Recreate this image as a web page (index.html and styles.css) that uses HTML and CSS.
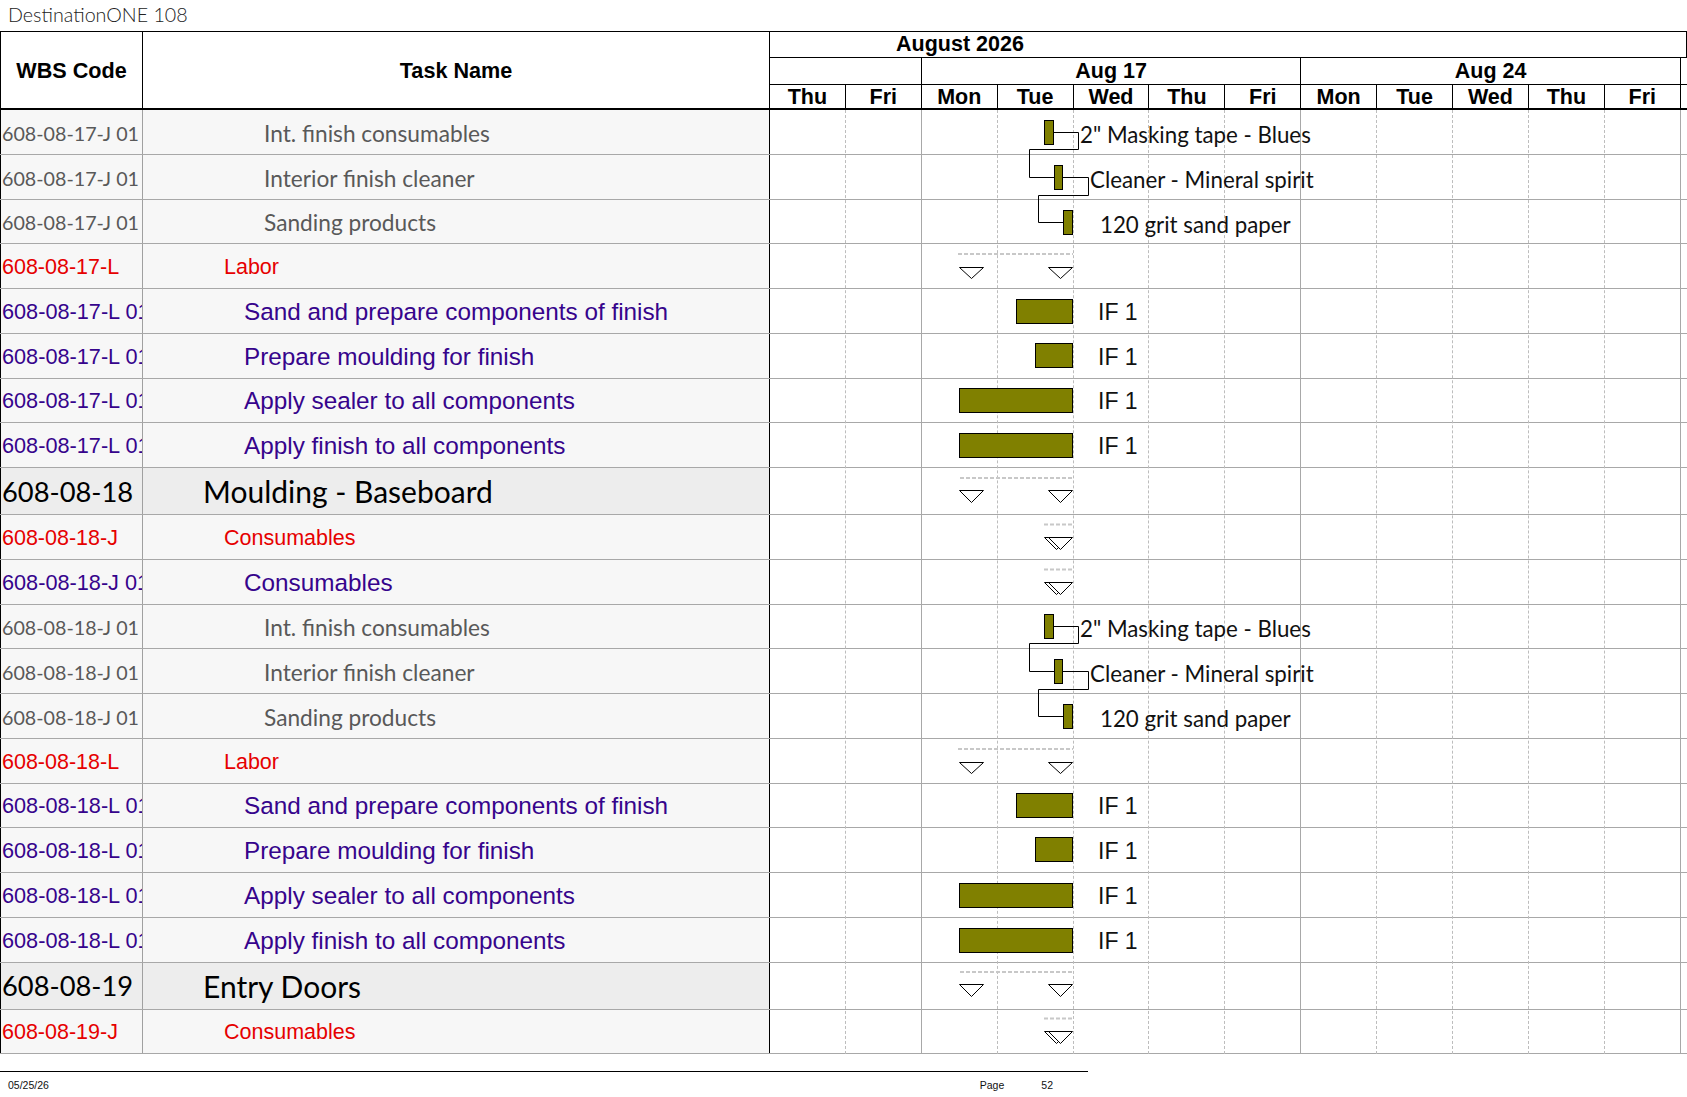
FILE: index.html
```html
<!DOCTYPE html>
<html lang="en">
<head>
<meta charset="utf-8">
<title>DestinationONE 108</title>
<link rel="stylesheet" href="styles.css">
</head>
<body>
<div class="page">
  <div class="title">DestinationONE 108</div>
  <div class="sheet">
    <div class="head">
      <div class="hcell wbs">WBS Code</div>
      <div class="hcell task">Task Name</div>
      <div class="timescale">
        <div class="month"><span>August 2026</span></div>
        <div class="weeks">
          <div class="wk lead"></div>
          <div class="wk">Aug 17</div>
          <div class="wk">Aug 24</div>
          <div class="wk-tail"></div>
        </div>
        <div class="days">
          <div class="day">Thu</div><div class="day">Fri</div><div class="day">Mon</div><div class="day">Tue</div>
          <div class="day">Wed</div><div class="day">Thu</div><div class="day">Fri</div><div class="day">Mon</div>
          <div class="day">Tue</div><div class="day">Wed</div><div class="day">Thu</div><div class="day">Fri</div>
          <div class="day-tail"></div>
        </div>
      </div>
    </div>

    <div class="body">
      <div class="gridlines">
        <div class="gl"></div><div class="gl we"></div><div class="gl"></div><div class="gl"></div>
        <div class="gl"></div><div class="gl"></div><div class="gl we"></div><div class="gl"></div>
        <div class="gl"></div><div class="gl"></div><div class="gl"></div><div class="gl we"></div>
      </div>

      <div class="row res"><div class="c-wbs">608-08-17-J 01</div><div class="c-task">Int. finish consumables</div><div class="c-chart"></div></div>
      <div class="row res"><div class="c-wbs">608-08-17-J 01</div><div class="c-task">Interior finish cleaner</div><div class="c-chart"></div></div>
      <div class="row res"><div class="c-wbs">608-08-17-J 01</div><div class="c-task">Sanding products</div><div class="c-chart"></div></div>
      <div class="row lvl"><div class="c-wbs">608-08-17-L</div><div class="c-task">Labor</div><div class="c-chart"></div></div>
      <div class="row tsk"><div class="c-wbs">608-08-17-L 01</div><div class="c-task">Sand and prepare components of finish</div><div class="c-chart"></div></div>
      <div class="row tsk"><div class="c-wbs">608-08-17-L 01</div><div class="c-task">Prepare moulding for finish</div><div class="c-chart"></div></div>
      <div class="row tsk"><div class="c-wbs">608-08-17-L 01</div><div class="c-task">Apply sealer to all components</div><div class="c-chart"></div></div>
      <div class="row tsk"><div class="c-wbs">608-08-17-L 01</div><div class="c-task">Apply finish to all components</div><div class="c-chart"></div></div>
      <div class="row grp"><div class="c-wbs">608-08-18</div><div class="c-task">Moulding - Baseboard</div><div class="c-chart"></div></div>
      <div class="row lvl"><div class="c-wbs">608-08-18-J</div><div class="c-task">Consumables</div><div class="c-chart"></div></div>
      <div class="row tsk"><div class="c-wbs">608-08-18-J 01</div><div class="c-task">Consumables</div><div class="c-chart"></div></div>
      <div class="row res"><div class="c-wbs">608-08-18-J 01</div><div class="c-task">Int. finish consumables</div><div class="c-chart"></div></div>
      <div class="row res"><div class="c-wbs">608-08-18-J 01</div><div class="c-task">Interior finish cleaner</div><div class="c-chart"></div></div>
      <div class="row res"><div class="c-wbs">608-08-18-J 01</div><div class="c-task">Sanding products</div><div class="c-chart"></div></div>
      <div class="row lvl"><div class="c-wbs">608-08-18-L</div><div class="c-task">Labor</div><div class="c-chart"></div></div>
      <div class="row tsk"><div class="c-wbs">608-08-18-L 01</div><div class="c-task">Sand and prepare components of finish</div><div class="c-chart"></div></div>
      <div class="row tsk"><div class="c-wbs">608-08-18-L 01</div><div class="c-task">Prepare moulding for finish</div><div class="c-chart"></div></div>
      <div class="row tsk"><div class="c-wbs">608-08-18-L 01</div><div class="c-task">Apply sealer to all components</div><div class="c-chart"></div></div>
      <div class="row tsk"><div class="c-wbs">608-08-18-L 01</div><div class="c-task">Apply finish to all components</div><div class="c-chart"></div></div>
      <div class="row grp"><div class="c-wbs">608-08-19</div><div class="c-task">Entry Doors</div><div class="c-chart"></div></div>
      <div class="row lvl"><div class="c-wbs">608-08-19-J</div><div class="c-task">Consumables</div><div class="c-chart"></div></div>

      <svg class="gantt" width="1687" height="945" viewBox="0 110 1687 945" xmlns="http://www.w3.org/2000/svg">
        <g class="summ">
          <path d="M958 254H1073"/><path d="M960 478H1074"/><path d="M1044 524.5H1073"/><path d="M1044 569.5H1073"/>
          <path d="M958 749H1073"/><path d="M960 972H1074"/><path d="M1044 1018.5H1073"/>
        </g>
        <g class="tri">
          <polygon points="959.5,267.5 983.5,267.5 971.5,278.5"/><polygon points="1048.5,267.5 1072.5,267.5 1060.5,278.5"/>
          <polygon points="959.5,490.5 983.5,490.5 971.5,502.5"/><polygon points="1048.5,490.5 1072.5,490.5 1060.5,502.5"/>
          <polygon points="1044.5,537.5 1068.5,537.5 1056.5,549.5"/><polygon points="1048.5,537.5 1072.5,537.5 1060.5,549.5"/>
          <polygon points="1044.5,582.5 1068.5,582.5 1056.5,594.5"/><polygon points="1048.5,582.5 1072.5,582.5 1060.5,594.5"/>
          <polygon points="959.5,762.5 983.5,762.5 971.5,773.5"/><polygon points="1048.5,762.5 1072.5,762.5 1060.5,773.5"/>
          <polygon points="959.5,984.5 983.5,984.5 971.5,996.5"/><polygon points="1048.5,984.5 1072.5,984.5 1060.5,996.5"/>
          <polygon points="1044.5,1031.5 1068.5,1031.5 1056.5,1043.5"/><polygon points="1048.5,1031.5 1072.5,1031.5 1060.5,1043.5"/>
        </g>
        <g class="link">
          <path d="M1053.5 132.5H1078.5V149.5H1029.5V177.5H1054.5"/>
          <path d="M1062.5 177.5H1088.5V195.5H1038.5V222.5H1063.5"/>
          <path d="M1053.5 626.5H1078.5V643.5H1029.5V671.5H1054.5"/>
          <path d="M1062.5 671.5H1088.5V689.5H1038.5V716.5H1063.5"/>
        </g>
        <g class="bar">
          <rect x="1044.5" y="120.5" width="9" height="24"/>
          <rect x="1054.5" y="165.5" width="8" height="24"/>
          <rect x="1063.5" y="210.5" width="9" height="24"/>
          <rect x="1016.5" y="299.5" width="56" height="24"/>
          <rect x="1035.5" y="343.5" width="37" height="24"/>
          <rect x="959.5" y="388.5" width="113" height="24"/>
          <rect x="959.5" y="433.5" width="113" height="24"/>
          <rect x="1044.5" y="614.5" width="9" height="24"/>
          <rect x="1054.5" y="659.5" width="8" height="24"/>
          <rect x="1063.5" y="704.5" width="9" height="24"/>
          <rect x="1016.5" y="793.5" width="56" height="24"/>
          <rect x="1035.5" y="837.5" width="37" height="24"/>
          <rect x="959.5" y="883.5" width="113" height="24"/>
          <rect x="959.5" y="928.5" width="113" height="24"/>
        </g>
        <g class="lbl">
          <text x="1080" y="142.5">2" Masking tape - Blues</text>
          <text x="1090" y="187.5">Cleaner - Mineral spirit</text>
          <text x="1100" y="232.5">120 grit sand paper</text>
          <text x="1080" y="636.5">2" Masking tape - Blues</text>
          <text x="1090" y="681.5">Cleaner - Mineral spirit</text>
          <text x="1100" y="726.5">120 grit sand paper</text>
        </g>
        <g class="iflbl">
          <text x="1098" y="319.5">IF 1</text>
          <text x="1098" y="364.5">IF 1</text>
          <text x="1098" y="408.5">IF 1</text>
          <text x="1098" y="453.5">IF 1</text>
          <text x="1098" y="813.5">IF 1</text>
          <text x="1098" y="858.5">IF 1</text>
          <text x="1098" y="903.5">IF 1</text>
          <text x="1098" y="948.5">IF 1</text>
        </g>
      </svg>
    </div>
  </div>
  <div class="footer">
    <span class="f-date">05/25/26</span>
    <span class="f-page">Page</span>
    <span class="f-num">52</span>
  </div>
</div>
</body>
</html>
```

FILE: styles.css
```css
* { box-sizing: border-box; }
html, body { margin: 0; padding: 0; background: #fff; }
body {
  width: 1687px;
  height: 1097px;
  overflow: hidden;
  font-family: "Liberation Sans", Arial, sans-serif;
  color: #000;
}
.page { width: 1687px; }

.title {
  height: 31px;
  padding-left: 8px;
  font-family: "Lato", "Open Sans", sans-serif;
  font-weight: 300;
  font-size: 19.7px;
  line-height: 30px;
  color: #222;
}

.sheet { border-top: 1px solid #000; }

/* ---------- header ---------- */
.head {
  display: flex;
  height: 78px;
  border-bottom: 2px solid #000;
}
.hcell {
  display: flex;
  align-items: center;
  justify-content: center;
  font-weight: bold;
  font-size: 21.6px;
  padding-top: 2px;
}
.hcell.wbs { width: 143px; border-left: 1px solid #000; border-right: 1px solid #000; }
.hcell.task { width: 627px; border-right: 1px solid #000; }
.timescale { flex: 1; display: flex; flex-direction: column; }
.month {
  height: 26px;
  border-bottom: 1px solid #000;
  border-right: 1px solid #000;
  display: flex;
  align-items: center;
  padding-left: 126px;
  font-weight: bold;
  font-size: 21.5px;
}
.weeks { height: 27px; border-bottom: 1px solid #000; display: flex; }
.wk {
  width: 379.6px;
  border-right: 1px solid #000;
  display: flex;
  align-items: center;
  justify-content: center;
  font-weight: bold;
  font-size: 21.5px;
}
.wk.lead { width: 151.8px; }
.wk-tail { flex: 1; }
.days {
  height: 23px;
  display: grid;
  grid-template-columns: repeat(12, 75.9px) 1fr;
}
.day {
  border-right: 1px solid #000;
  display: flex;
  align-items: center;
  justify-content: center;
  font-weight: bold;
  font-size: 21.5px;
}

/* ---------- body ---------- */
.body { position: relative; }
.gridlines {
  position: absolute;
  left: 770px;
  top: 0;
  bottom: 0;
  display: grid;
  grid-template-columns: repeat(12, 75.9px);
  pointer-events: none;
}
.gl { border-right: 1px dashed #bdbdbd; }
.gl.we { border-right: 1px solid #a8a8a8; }

.row {
  display: flex;
  height: 44.75px;
  border-bottom: 1px solid #a8a8a8;
}
.row.grp { height: 47px; }
.c-wbs {
  width: 143px;
  border-left: 1px solid #000;
  border-right: 1px solid #a0a0a0;
  background: #f7f7f7;
  overflow: hidden;
  white-space: nowrap;
  display: flex;
  align-items: center;
  padding-left: 1px;
}
.c-task {
  width: 627px;
  border-right: 1px solid #000;
  background: #f7f7f7;
  overflow: hidden;
  white-space: nowrap;
  display: flex;
  align-items: center;
}
.c-chart { flex: 1; }

.res { font-family: "Lato", "Open Sans", sans-serif; color: #595959; }
.res .c-wbs, .res .c-task { padding-top: 3px; }
.res .c-wbs { font-size: 19.7px; }
.res .c-task { font-size: 22.7px; padding-left: 121px; }

.lvl { color: #e60000; font-size: 21.5px; }
.lvl .c-wbs, .lvl .c-task { padding-top: 3px; }
.lvl .c-task { padding-left: 81px; }

.tsk { color: #36048c; }
.tsk .c-wbs, .tsk .c-task { padding-top: 2px; }
.tsk .c-wbs { font-size: 21.7px; }
.tsk .c-task { font-size: 24.3px; padding-left: 101px; }

.grp { font-family: "Lato", "Open Sans", sans-serif; color: #000; }
.grp .c-wbs { font-size: 27.3px; }
.grp .c-wbs, .grp .c-task { background: #ededed; }
.grp .c-task { font-size: 30px; padding-left: 60px; }

/* ---------- gantt drawing ---------- */
.gantt {
  position: absolute;
  left: 0;
  top: 0;
  overflow: visible;
  pointer-events: none;
}
.summ path { stroke: #c8c8c8; stroke-width: 2; stroke-dasharray: 4 2; fill: none; }
.tri polygon { fill: #fff; stroke: #000; stroke-width: 1; }
.link path { fill: none; stroke: #000; stroke-width: 1; }
.bar rect { fill: #808000; stroke: #000; stroke-width: 1; }
.lbl text { font-family: "Lato", "Open Sans", sans-serif; font-size: 22.3px; fill: #111; }
.iflbl text { font-family: "Liberation Sans", Arial, sans-serif; font-size: 23px; fill: #111; }

/* ---------- footer ---------- */
.footer {
  width: 1088px;
  margin-top: 17px;
  border-top: 1px solid #000;
  display: flex;
  padding-top: 6px;
  font-size: 10.5px;
  line-height: 14px;
  color: #111;
}
.f-date { margin-left: 8px; }
.f-page { margin-left: auto; }
.f-num { margin-left: 37px; margin-right: 35px; }
```
